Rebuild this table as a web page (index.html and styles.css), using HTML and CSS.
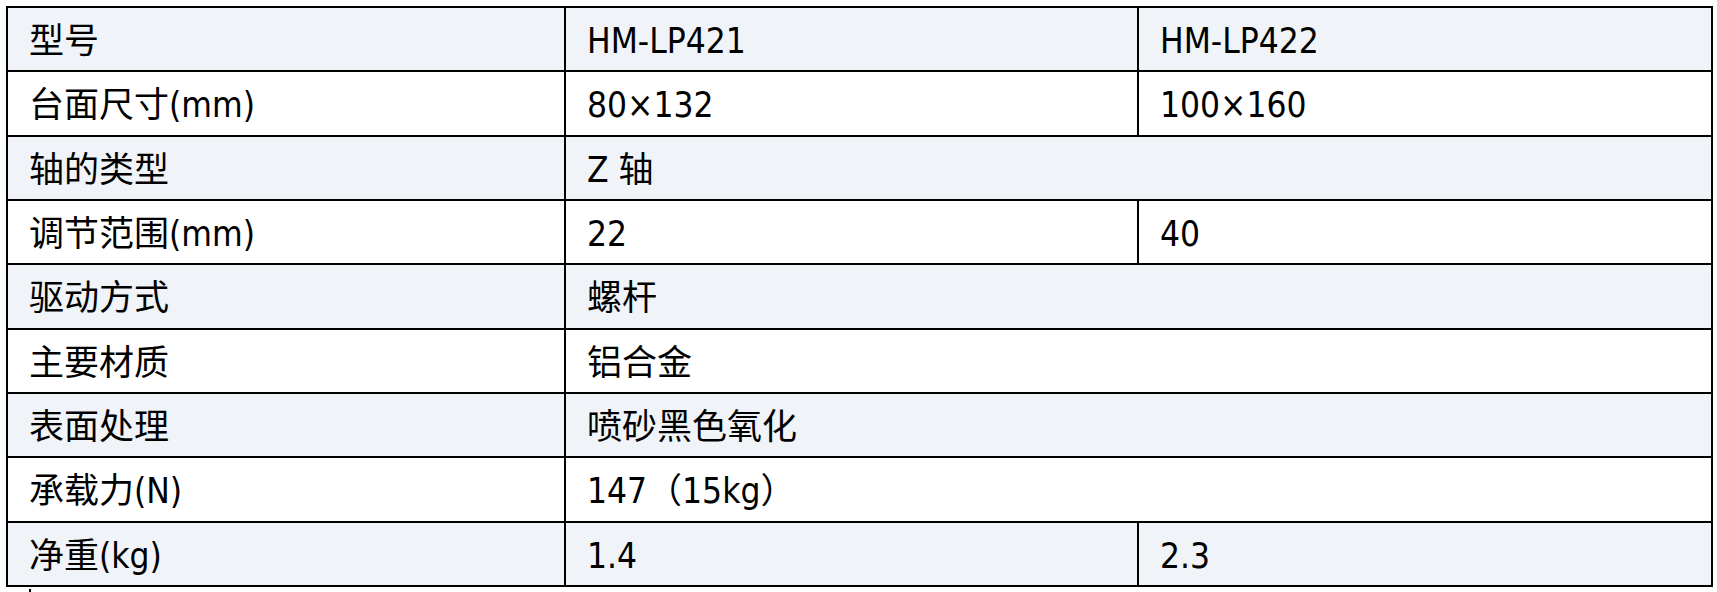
FILE: index.html
```html
<!DOCTYPE html>
<html lang="zh">
<head>
<meta charset="utf-8">
<title>规格参数</title>
<link rel="stylesheet" href="styles.css">
</head>
<body>
<table class="spec">
  <colgroup>
    <col class="c1">
    <col class="c2">
    <col class="c3">
  </colgroup>
  <tbody>
    <tr class="shade"><td>型号</td><td>HM-LP421</td><td>HM-LP422</td></tr>
    <tr><td>台面尺寸(mm)</td><td>80×132</td><td>100×160</td></tr>
    <tr class="shade"><td>轴的类型</td><td colspan="2">Z 轴</td></tr>
    <tr><td>调节范围(mm)</td><td>22</td><td>40</td></tr>
    <tr class="shade"><td>驱动方式</td><td colspan="2">螺杆</td></tr>
    <tr><td>主要材质</td><td colspan="2">铝合金</td></tr>
    <tr class="shade"><td>表面处理</td><td colspan="2">喷砂黑色氧化</td></tr>
    <tr><td>承载力(N)</td><td colspan="2">147（15kg）</td></tr>
    <tr class="shade"><td>净重(kg)</td><td>1.4</td><td>2.3</td></tr>
  </tbody>
</table>
<div class="mark"></div>
</body>
</html>
```
FILE: styles.css
```css
html, body {
  margin: 0;
  padding: 0;
  background: #ffffff;
}
body {
  padding: 6px 0 0 6px;
  font-family: "DejaVu Sans Condensed", "DejaVu Sans", "Noto Sans CJK SC", sans-serif;
  font-stretch: condensed;
  color: #000;
}
.spec {
  border-collapse: collapse;
  table-layout: fixed;
  width: 1705px;
}
.c1 { width: 558px; }
.c2 { width: 573px; }
.c3 { width: 574px; }
.spec td {
  border: 2px solid #000;
  height: 62px;
  padding: 4px 0 0 21px;
  box-sizing: border-box;
  font-size: 35px;
  line-height: 40px;
  vertical-align: middle;
  white-space: nowrap;
}
.spec tr {
  height: 64.33px;
}
.spec tr.shade td {
  background: #f0f3f8;
}
.mark {
  width: 2px;
  height: 3px;
  margin: 2px 0 0 23px;
  background: #000;
}
```
